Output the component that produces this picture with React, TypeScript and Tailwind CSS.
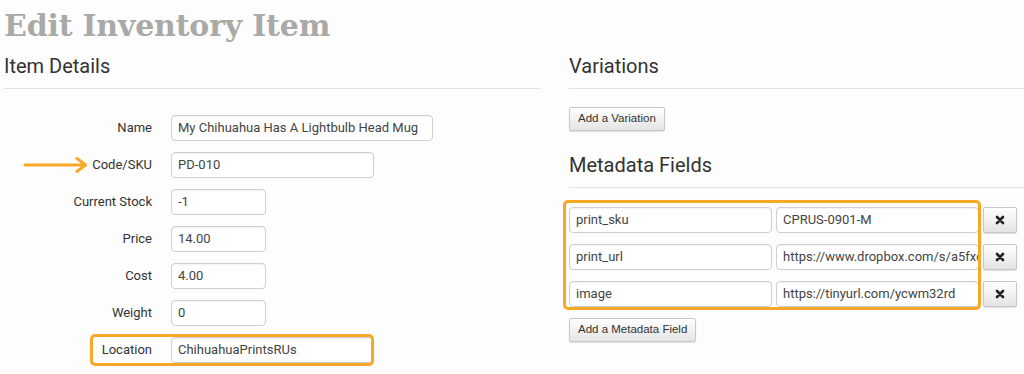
import { ReactNode } from 'react';

const campos = [
  { etiqueta: 'Name', valor: 'My Chihuahua Has A Lightbulb Head Mug', ancho: 'w-[262px]' },
  { etiqueta: 'Code/SKU', valor: 'PD-010', ancho: 'w-[203px]' },
  { etiqueta: 'Current Stock', valor: '-1', ancho: 'w-[95px]' },
  { etiqueta: 'Price', valor: '14.00', ancho: 'w-[95px]' },
  { etiqueta: 'Cost', valor: '4.00', ancho: 'w-[95px]' },
  { etiqueta: 'Weight', valor: '0', ancho: 'w-[95px]' },
  { etiqueta: 'Location', valor: 'ChihuahuaPrintsRUs', ancho: 'w-[202px]' },
];

const metadatos = [
  { clave: 'print_sku', valor: 'CPRUS-0901-M' },
  { clave: 'print_url', valor: 'https://www.dropbox.com/s/a5fxq7k2' },
  { clave: 'image', valor: 'https://tinyurl.com/ycwm32rd' },
];

function Campo({ valor, className }: { valor: string; className?: string }) {
  return (
    <div
      className={`h-[26px] border border-[#cfcfcf] rounded-[4px] bg-white px-[6px] flex items-center text-[13px] text-[#444] whitespace-nowrap overflow-hidden shadow-[inset_0_1px_1px_rgba(0,0,0,0.05)] ${className ?? ''}`}
    >
      {valor}
    </div>
  );
}

function Boton({ children, className }: { children: ReactNode; className?: string }) {
  return (
    <button
      className={`h-[24px] px-[8px] font-['Liberation_Sans',Arial,sans-serif] text-[11.5px] text-[#333] border border-[#c8c8c8] rounded-[2px] bg-gradient-to-b from-white to-[#e4e4e4] shadow-[0_1px_1px_rgba(0,0,0,0.12)] ${className ?? ''}`}
    >
      {children}
    </button>
  );
}

export default function App() {
  return (
    <div className="w-[1024px] h-[374px] overflow-hidden bg-[#fdfdfd] font-['Roboto',Arial,sans-serif] relative">
      {/* Título principal */}
      <h1 className="pl-[4px] pt-[8px] h-[44px] font-['DejaVu_Serif',serif] font-bold text-[30px] leading-[36px] text-[#a9a9a6] tracking-[-0.2px]">
        Edit Inventory Item
      </h1>

      <div className="flex gap-[28px] pl-[4px]">
        {/* Columna izquierda: detalles del artículo */}
        <div className="w-[537px]">
          <h2 className="text-[20px] leading-[26px] text-[#333] pt-[9px] pb-[9px] border-b border-[#e2e2e2]">
            Item Details
          </h2>

          <div className="flex flex-col gap-[11px] pt-[26px] relative">
            {campos.map((c) => (
              <div key={c.etiqueta} className="flex items-center">
                <label className="w-[148px] text-right text-[13px] text-[#333]">{c.etiqueta}</label>
                <Campo valor={c.valor} className={`ml-[19px] ${c.ancho}`} />
              </div>
            ))}

            {/* Flecha de anotación hacia Code/SKU */}
            <svg className="absolute left-[19px] top-[68px] w-[66px] h-[16px]" viewBox="0 0 66 16">
              <path d="M2 8 H62" stroke="#f7a824" strokeWidth="3" strokeLinecap="round" />
              <path d="M54 1.5 L62.5 8 L54 14.5" stroke="#f7a824" strokeWidth="3" fill="none" strokeLinecap="round" strokeLinejoin="round" />
            </svg>

            {/* Resaltado de Location */}
            <div className="absolute left-[86px] top-[245px] w-[284px] h-[32px] border-[3px] border-[#f7a824] rounded-[5px] pointer-events-none" />
          </div>
        </div>

        {/* Columna derecha: variaciones y metadatos */}
        <div className="flex-1">
          <h2 className="text-[20px] leading-[26px] text-[#333] pt-[9px] pb-[9px] border-b border-[#e2e2e2]">
            Variations
          </h2>
          <Boton className="mt-[18px]">Add a Variation</Boton>

          <h2 className="text-[20px] leading-[26px] text-[#333] pt-[21px] pb-[9px] border-b border-[#e2e2e2]">
            Metadata Fields
          </h2>

          <div className="relative pt-[19px] flex flex-col gap-[11px]">
            {metadatos.map((m) => (
              <div key={m.clave} className="flex items-center">
                <Campo valor={m.clave} className="w-[203px]" />
                <Campo valor={m.valor} className="w-[203px] ml-[4px]" />
                <button className="ml-[4px] w-[34px] h-[26px] border border-[#c8c8c8] rounded-[2px] bg-gradient-to-b from-white to-[#e4e4e4] shadow-[0_1px_1px_rgba(0,0,0,0.12)] flex items-center justify-center">
                  <svg viewBox="0 0 10 10" className="w-[10px] h-[10px]">
                    <path d="M2 2 L8 8 M8 2 L2 8" stroke="#222" strokeWidth="2.6" strokeLinecap="round" />
                  </svg>
                </button>
              </div>
            ))}

            {/* Resaltado de los campos de metadatos */}
            <div className="absolute left-[-6px] top-[12px] w-[418px] h-[110px] border-[3px] border-[#f7a824] rounded-[5px] pointer-events-none" />
          </div>

          <Boton className="mt-[11px]">Add a Metadata Field</Boton>
        </div>
      </div>
    </div>
  );
}
